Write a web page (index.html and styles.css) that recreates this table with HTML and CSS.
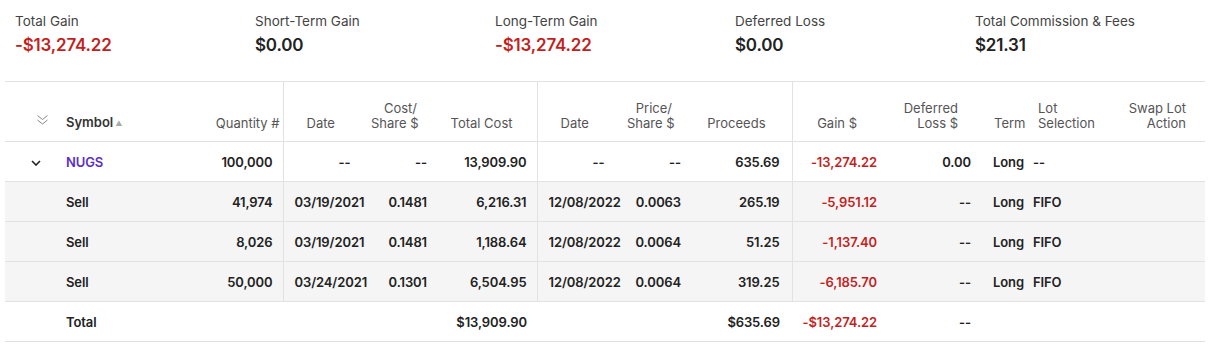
FILE: index.html
```html
<!DOCTYPE html>
<html lang="en">
<head>
    <meta charset="UTF-8"/>
    <title>Realized Gain/Loss</title>
    <link rel="stylesheet" href="styles.css">
</head>
<body>
    <div class="summary">
        <div class="stat">
            <div class="stat-label">Total Gain</div>
            <div class="stat-value neg">-$13,274.22</div>
        </div>
        <div class="stat">
            <div class="stat-label">Short-Term Gain</div>
            <div class="stat-value">$0.00</div>
        </div>
        <div class="stat">
            <div class="stat-label">Long-Term Gain</div>
            <div class="stat-value neg">-$13,274.22</div>
        </div>
        <div class="stat">
            <div class="stat-label">Deferred Loss</div>
            <div class="stat-value">$0.00</div>
        </div>
        <div class="stat">
            <div class="stat-label">Total Commission &amp; Fees</div>
            <div class="stat-value">$21.31</div>
        </div>
    </div>

    <table class="lots">
        <colgroup>
            <col style="width:50px"><col style="width:135px"><col style="width:93px">
            <col style="width:88px"><col style="width:66px"><col style="width:100px">
            <col style="width:90px"><col style="width:64px"><col style="width:101px">
            <col style="width:95px"><col style="width:94px"><col style="width:49px">
            <col style="width:90px"><col style="width:85px">
        </colgroup>
        <thead>
            <tr>
                <th class="icon-cell">
                    <svg class="expand-all" width="13" height="12" viewBox="0 0 13 12">
                        <path d="M1.5 1.5 L6.5 5.5 L11.5 1.5 M1.5 6 L6.5 10 L11.5 6" fill="none" stroke="#888" stroke-width="1"/>
                    </svg>
                </th>
                <th class="sym-h">Symbol<span class="sort">&#9650;</span></th>
                <th class="num qty-h div">Quantity #</th>
                <th class="date-h">Date</th>
                <th class="num cps-h">Cost/<br>Share $</th>
                <th class="num tc-h div">Total Cost</th>
                <th class="date-h">Date</th>
                <th class="num pps-h">Price/<br>Share $</th>
                <th class="num proc-h div">Proceeds</th>
                <th class="num gain-h">Gain $</th>
                <th class="num def-h">Deferred<br>Loss $</th>
                <th class="term-h">Term</th>
                <th class="lot-h">Lot<br>Selection</th>
                <th class="num swap-h">Swap Lot<br>Action</th>
            </tr>
        </thead>
        <tbody>
            <tr class="parent">
                <td class="icon-cell">
                    <svg width="10" height="6" viewBox="0 0 10 6">
                        <path d="M1 1 L5 5 L9 1" fill="none" stroke="#222" stroke-width="1.6"/>
                    </svg>
                </td>
                <td class="sym"><a href="#">NUGS</a></td>
                <td class="num div">100,000</td>
                <td class="dash-date">--</td>
                <td class="num">--</td>
                <td class="num div">13,909.90</td>
                <td class="dash-date">--</td>
                <td class="num">--</td>
                <td class="num proc div">635.69</td>
                <td class="num neg">-13,274.22</td>
                <td class="num">0.00</td>
                <td class="term">Long</td>
                <td class="lot">--</td>
                <td></td>
            </tr>
            <tr class="child">
                <td></td>
                <td class="sym">Sell</td>
                <td class="num div">41,974</td>
                <td class="date">03/19/2021</td>
                <td class="num">0.1481</td>
                <td class="num div">6,216.31</td>
                <td class="date">12/08/2022</td>
                <td class="num">0.0063</td>
                <td class="num proc div">265.19</td>
                <td class="num neg">-5,951.12</td>
                <td class="num">--</td>
                <td class="term">Long</td>
                <td class="lot">FIFO</td>
                <td></td>
            </tr>
            <tr class="child">
                <td></td>
                <td class="sym">Sell</td>
                <td class="num div">8,026</td>
                <td class="date">03/19/2021</td>
                <td class="num">0.1481</td>
                <td class="num div">1,188.64</td>
                <td class="date">12/08/2022</td>
                <td class="num">0.0064</td>
                <td class="num proc div">51.25</td>
                <td class="num neg">-1,137.40</td>
                <td class="num">--</td>
                <td class="term">Long</td>
                <td class="lot">FIFO</td>
                <td></td>
            </tr>
            <tr class="child">
                <td></td>
                <td class="sym">Sell</td>
                <td class="num div">50,000</td>
                <td class="date">03/24/2021</td>
                <td class="num">0.1301</td>
                <td class="num div">6,504.95</td>
                <td class="date">12/08/2022</td>
                <td class="num">0.0064</td>
                <td class="num proc div">319.25</td>
                <td class="num neg">-6,185.70</td>
                <td class="num">--</td>
                <td class="term">Long</td>
                <td class="lot">FIFO</td>
                <td></td>
            </tr>
            <tr class="total">
                <td></td>
                <td class="sym">Total</td>
                <td></td>
                <td></td>
                <td></td>
                <td class="num">$13,909.90</td>
                <td></td>
                <td></td>
                <td class="num proc">$635.69</td>
                <td class="num neg">-$13,274.22</td>
                <td class="num">--</td>
                <td></td>
                <td></td>
                <td></td>
            </tr>
        </tbody>
    </table>
</body>
</html>
```

FILE: styles.css
```css
body{
    margin: 0;
    padding: 0 10px 0 5px;
    font-family: 'Inter', 'Roboto', sans-serif;
    color: #222;
    background: #fff;
}

.summary{
    display: grid;
    grid-template-columns: repeat(5, 240px);
    padding: 13px 0 0 10px;
    height: 68px;
    border-bottom: 1px solid #e2e2e2;
}

.stat-label{
    font-size: 13.5px;
    color: #444;
    line-height: 16px;
}

.stat-value{
    font-size: 17px;
    font-weight: 600;
    margin-top: 6px;
    line-height: 20px;
    letter-spacing: -0.2px;
}

.neg{
    color: #c41f1f;
}

.lots{
    width: 1200px;
    table-layout: fixed;
    border-collapse: collapse;
    font-size: 13px;
}

.lots th{
    height: 47px;
    padding: 0 0 10px 0;
    vertical-align: bottom;
    font-weight: 400;
    color: #555;
    line-height: 15px;
    text-align: left;
    white-space: nowrap;
    border-bottom: 1px solid #e2e2e2;
}

.lots td{
    height: 39px;
    padding: 0;
    font-weight: 600;
    letter-spacing: -0.1px;
    border-bottom: 1px solid #e2e2e2;
    white-space: nowrap;
}

.lots .num{
    text-align: right;
    padding-right: 10px;
}

.lots .div{
    border-right: 1px solid #e2e2e2;
}

.lots th.icon-cell{
    padding-left: 31px;
    padding-bottom: 12px;
    text-align: left;
}

.lots td.icon-cell{
    padding-left: 26px;
    text-align: left;
    line-height: 6px;
}

.lots .sym-h{
    color: #333;
    font-weight: 600;
    padding-left: 11px;
}

.sort{
    font-size: 7px;
    color: #aaa;
    margin-left: 2px;
    vertical-align: 1px;
}

.lots .qty-h{ padding-right: 3px; }
.lots .date-h{ padding-left: 23px; }
.lots .cps-h{ padding-right: 20px; }
.lots .tc-h{ padding-right: 24px; }
.lots .pps-h{ padding-right: 19px; }
.lots .proc-h{ padding-right: 26px; }
.lots .gain-h{ padding-right: 30px; }
.lots .def-h{ padding-right: 23px; }
.lots .term-h{ padding-left: 13px; }
.lots .lot-h{ padding-left: 8px; }
.lots .swap-h{ padding-right: 19px; }

.lots .proc{
    padding-right: 12px;
}

.lots .sym{
    padding-left: 11px;
}

.sym a{
    color: #5a2fc6;
    text-decoration: none;
}

.lots .date{
    padding-left: 11px;
}

.lots .dash-date{
    padding-left: 55px;
}

.lots .term{
    padding-left: 12px;
}

.lots .lot{
    padding-left: 3px;
}

.child td{
    background: #f5f5f5;
}
```
